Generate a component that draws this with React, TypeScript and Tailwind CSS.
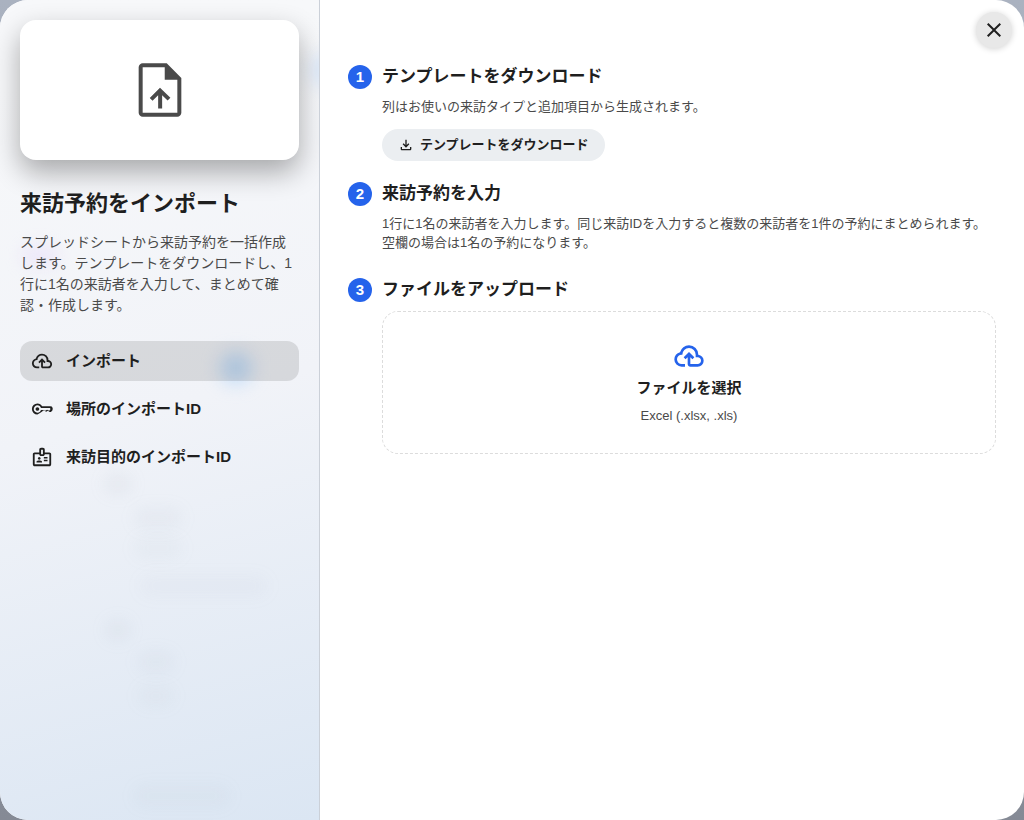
import { useState } from "react";
import type { ReactNode } from "react";
import clsx from "clsx";

// Material Symbols paths, all drawn on the 960 grid
const ICONS = {
  uploadFile:
    "M452-202h60v-201l82 82 42-42-156-152-154 154 42 42 84-84v201ZM220-80q-24 0-42-18t-18-42v-680q0-24 18-42t42-18h361l219 219v521q0 24-18 42t-42 18H220Zm331-554v-186H220v680h520v-494H551Z",
  cloudUpload:
    "M260-160q-91 0-155.5-63T40-377q0-78 47-139t123-78q25-92 100-149t170-57q117 0 198.5 81.5T760-520q69 8 114.5 59.5T920-340q0 75-52.5 127.5T740-160H520q-33 0-56.5-23.5T440-240v-206l-64 62-56-56 160-160 160 160-56 56-64-62v206h220q42 0 71-29t29-71q0-42-29-71t-71-29h-60v-80q0-83-58.5-141.5T480-720q-83 0-141.5 58.5T280-520h-20q-58 0-99 41t-41 99q0 58 41 99t99 41h100v80H260Z",
  key: "M280-400q-33 0-56.5-23.5T200-480q0-33 23.5-56.5T280-560q33 0 56.5 23.5T360-480q0 33-23.5 56.5T280-400Zm0 160q-100 0-170-70T40-480q0-100 70-170t170-70q67 0 121.5 33t86.5 87h352q80 0 100 60t0 60q20 40-20 80l-40 40q-40 30-80 0l-60-42-80 42-85-60h-47q-32 54-86.5 87T280-240Zm0-80q56 0 98.5-34t56.5-86h125l58 41 82-46 95 42 45-52q20-25 0-45l-20-20H435q-14-52-56.5-86T280-640q-66 0-113 47t-47 113q0 66 47 113t113 47Z",
  badge:
    "M160-80q-33 0-56.5-23.5T80-160v-440q0-33 23.5-56.5T160-680h200v-120q0-33 23.5-56.5T440-880h80q33 0 56.5 23.5T600-800v120h200q33 0 56.5 23.5T880-600v440q0 33-23.5 56.5T800-80H160Zm0-80h640v-440H600q0 33-23.5 56.5T520-520h-80q-33 0-56.5-23.5T360-600H160v440Zm80-80h240v-18q0-17-9.5-31.5T444-312q-20-9-40.5-13.5T360-330q-23 0-43.5 4.500T276-312q-17 8-26.5 22.500T240-258v18Zm320-60h160v-60H560v60Zm-200-60q25 0 42.5-17.500T420-420q0-25-17.500-42.500T360-480q-25 0-42.500 17.500T300-420q0 25 17.500 42.500T360-360Zm200-60h160v-60H560v60ZM440-600h80v-200h-80v200Z",
  download:
    "M480-320 280-520l56-58 104 104v-326h80v326l104-104 56 58-200 200ZM240-160q-33 0-56.5-23.5T160-240v-120h80v120h480v-120h80v120q0 33-23.5 56.5T720-160H240Z",
  close:
    "m256-200-56-56 224-224-224-224 56-56 224 224 224-224 56 56-224 224 224 224-56 56-224-224-224 224Z",
};

type IconName = keyof typeof ICONS;

function Icon({ name, className }: { name: IconName; className?: string }) {
  return (
    <svg viewBox="0 -960 960 960" fill="currentColor" aria-hidden="true" className={clsx("shrink-0", className)}>
      <path d={ICONS[name]} />
    </svg>
  );
}

const NAV: { id: string; icon: IconName; label: string }[] = [
  { id: "import", icon: "cloudUpload", label: "インポート" },
  { id: "places", icon: "key", label: "場所のインポートID" },
  { id: "purposes", icon: "badge", label: "来訪目的のインポートID" },
];

const GLOWS = [
  "left-[220px] top-[352px] size-8 bg-[#a3cdf8]/60 blur-[9px]",
  "left-[310px] top-[52px] size-9 bg-[#cfe2fb]/60 blur-[8px]",
  "left-[22px] top-[246px] h-5 w-9 bg-[#e4d8fb]/45 blur-[8px]",
  "left-[104px] top-[474px] h-5 w-7 bg-[#9ca3af]/10 blur-[8px]",
  "left-[134px] top-[508px] h-5 w-12 bg-[#9ca3af]/8 blur-[8px]",
  "left-[134px] top-[538px] h-5 w-12 bg-[#9ca3af]/6 blur-[8px]",
  "left-[140px] top-[576px] h-5 w-32 bg-[#9ca3af]/5 blur-[8px]",
  "left-[106px] top-[620px] h-5 w-6 bg-[#9ca3af]/10 blur-[8px]",
  "left-[138px] top-[652px] h-5 w-9 bg-[#9ca3af]/8 blur-[8px]",
  "left-[138px] top-[686px] h-5 w-9 bg-[#9ca3af]/6 blur-[8px]",
  "left-[134px] top-[786px] h-5 w-24 bg-[#9ca3af]/6 blur-[8px]",
];

function Sidebar() {
  const [active, setActive] = useState("import");

  return (
    <aside className="relative isolate w-80 shrink-0 overflow-hidden border-r border-[#cbd0d8] bg-linear-165 from-[#f7f8fa] from-10% via-[#f1f3f8] via-50% to-[#dbe6f3] p-5">
      {GLOWS.map((glow) => (
        <span key={glow} className={clsx("absolute -z-10 rounded-full", glow)} />
      ))}

      <div className="flex h-[140px] items-center justify-center rounded-2xl bg-white text-[#4a4a4a] shadow-[0_12px_28px_rgba(0,0,0,0.32)]">
        <Icon name="uploadFile" className="size-16" />
      </div>

      <h1 className="mt-7 text-[22px] leading-8 font-bold">来訪予約をインポート</h1>
      <p className="mt-3 text-sm leading-[21px] text-[#4a4a4a]">
        スプレッドシートから来訪予約を一括作成します。テンプレートをダウンロードし、1行に1名の来訪者を入力して、まとめて確認・作成します。
      </p>

      <nav className="mt-[25px] flex flex-col gap-2">
        {NAV.map((item) => (
          <button
            key={item.id}
            type="button"
            onClick={() => setActive(item.id)}
            className={clsx(
              "flex h-10 items-center gap-[13px] rounded-xl px-[11px] text-left text-[15px] font-bold",
              active === item.id && "bg-black/11"
            )}
          >
            <Icon name={item.icon} className="size-[22px]" />
            {item.label}
          </button>
        ))}
      </nav>
    </aside>
  );
}

function Step({ no, title, children }: { no: number; title: string; children: ReactNode }) {
  return (
    <li className="flex gap-[10px]">
      <span className="flex size-6 shrink-0 items-center justify-center rounded-full bg-[#2563eb] text-[15px] leading-6 font-bold text-white">
        {no}
      </span>
      <div className="min-w-0 flex-1">
        <h2 className="text-[17px] leading-6 font-bold">{title}</h2>
        {children}
      </div>
    </li>
  );
}

export default function App() {
  return (
    <div className="min-h-screen bg-linear-to-b from-[#aab2c0] to-[#858a95] font-['Liberation_Sans','Noto_Sans_CJK_JP',sans-serif] text-[#1f1f1f]">
      <div role="dialog" aria-label="来訪予約をインポート" className="relative flex min-h-screen overflow-hidden rounded-[28px] bg-white">
        <Sidebar />

        <main className="min-w-0 flex-1 px-7 pt-[65px] pb-7">
          <ol>
            <Step no={1} title="テンプレートをダウンロード">
              <p className="mt-2 text-[13px] leading-[19px] text-[#4a4a4a]">
                列はお使いの来訪タイプと追加項目から生成されます。
              </p>
              <button
                type="button"
                className="mt-[13px] mb-[21px] flex h-8 items-center gap-[6px] rounded-full bg-[#ebeef1] px-4 text-[13px] font-bold"
              >
                <Icon name="download" className="size-4" />
                テンプレートをダウンロード
              </button>
            </Step>
            <Step no={2} title="来訪予約を入力">
              <p className="mt-2 mb-[26px] text-[13px] leading-[19px] text-[#4a4a4a]">
                1行に1名の来訪者を入力します。同じ来訪IDを入力すると複数の来訪者を1件の予約にまとめられます。空欄の場合は1名の予約になります。
              </p>
            </Step>
            <Step no={3} title="ファイルをアップロード">
              <label className="mt-[9px] flex cursor-pointer flex-col items-center rounded-2xl border border-dashed border-[#dcdcdc] py-7">
                <Icon name="cloudUpload" className="size-8 text-[#2563eb]" />
                <span className="mt-1 text-[15px] leading-6 font-bold">ファイルを選択</span>
                <span className="mt-[6px] text-[13px] leading-[19px] text-[#4a4a4a]">Excel (.xlsx, .xls)</span>
                <input type="file" accept=".xlsx,.xls" className="sr-only" />
              </label>
            </Step>
          </ol>
        </main>

        <button
          type="button"
          aria-label="閉じる"
          className="absolute top-3 right-3 flex size-9 items-center justify-center rounded-full bg-[#e8e8e8] shadow-[0_1px_6px_rgba(0,0,0,0.18)]"
        >
          <Icon name="close" className="size-6" />
        </button>
      </div>
    </div>
  );
}
